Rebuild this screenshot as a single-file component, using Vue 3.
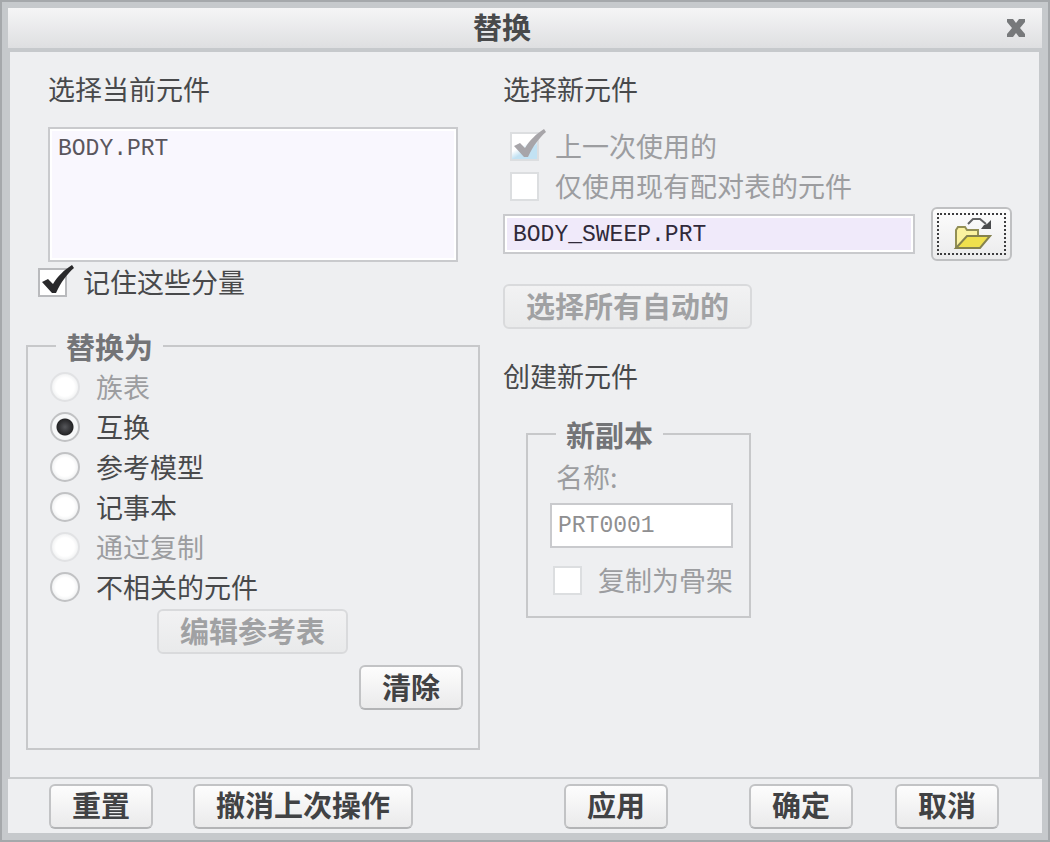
<script setup>
import { ref } from 'vue'

const currentParts = ref('BODY.PRT')
const remember = ref(true)
const lastUsed = ref(true)
const onlyPaired = ref(false)
const newPart = ref('BODY_SWEEP.PRT')
const method = ref('interchange')
const copyName = ref('PRT0001')
const asSkeleton = ref(false)

const methods = [
  { value: 'family', label: '族表', disabled: true },
  { value: 'interchange', label: '互换', disabled: false },
  { value: 'reference', label: '参考模型', disabled: false },
  { value: 'notebook', label: '记事本', disabled: false },
  { value: 'copy', label: '通过复制', disabled: true },
  { value: 'unrelated', label: '不相关的元件', disabled: false },
]
</script>

<template>
  <div class="window" role="dialog" aria-labelledby="dialog-title">
    <header class="titlebar">
      <h1 id="dialog-title">替换</h1>
      <button class="close" type="button" aria-label="关闭">
        <svg width="20" height="20" viewBox="0 0 20 20">
          <path d="M1 1 H7 L10 5 L13 1 H19 V4 L14 10 L19 16 V19 H13 L10 15 L7 19 H1 V16 L6 10 L1 4 Z" fill="#77797b" />
        </svg>
      </button>
    </header>

    <main class="content">
      <section class="left">
        <div class="current">
          <label class="heading" for="current-part">选择当前元件</label>
          <textarea id="current-part" v-model="currentParts" class="list" readonly></textarea>
        </div>

        <label class="option remember">
          <span class="box">
            <input v-model="remember" type="checkbox" />
            <svg v-if="remember" class="tick" width="36" height="34" viewBox="0 0 36 34">
              <path d="M4 18 L10 15 L15 20 C20 12 26 6 34 1 L36 4 C29 10 23 18 18 29 L14 29 Z" fill="#29292b" />
            </svg>
          </span>
          记住这些分量
        </label>

        <fieldset class="group replace">
          <legend>替换为</legend>
          <label
            v-for="item in methods"
            :key="item.value"
            class="option radio"
            :class="{ disabled: item.disabled }"
          >
            <input v-model="method" type="radio" name="method" :value="item.value" :disabled="item.disabled" />
            {{ item.label }}
          </label>
          <button class="btn edit" type="button" disabled>编辑参考表</button>
          <button class="btn clear" type="button">清除</button>
        </fieldset>
      </section>

      <section class="right">
        <h2 class="heading">选择新元件</h2>
        <div class="sources">
          <label class="option disabled">
            <span class="box">
              <input v-model="lastUsed" class="tinted" type="checkbox" disabled />
              <svg v-if="lastUsed" class="tick" width="36" height="34" viewBox="0 0 36 34">
                <path d="M4 18 L10 15 L15 20 C20 12 26 6 34 1 L36 4 C29 10 23 18 18 29 L14 29 Z" fill="#a7a5a9" />
              </svg>
            </span>
            上一次使用的
          </label>
          <label class="option disabled">
            <span class="box"><input v-model="onlyPaired" type="checkbox" disabled /></span>
            仅使用现有配对表的元件
          </label>
        </div>
        <div class="picker">
          <input v-model="newPart" class="field part" type="text" aria-label="新元件" />
          <button class="open" type="button" aria-label="打开">
            <svg width="40" height="36" viewBox="0 0 40 36">
              <path d="M4 32 V14 L6 11 H13 L15 14 H26 V19" fill="#fbf2a0" stroke="#928f55" stroke-width="2" />
              <path d="M4 32 L15 20 H38 L28 32 Z" fill="#efe04d" stroke="#85824f" stroke-width="2" />
              <path d="M16 8 L18 6 L21 3 H28 L34 8" fill="none" stroke="#606163" stroke-width="2" />
              <path d="M39 4 V13 H29 L32 9 L35 8 Z" fill="#4b4c4e" />
            </svg>
          </button>
        </div>
        <button class="btn auto" type="button" disabled>选择所有自动的</button>

        <h2 class="heading create">创建新元件</h2>
        <fieldset class="group copy">
          <legend>新副本</legend>
          <label class="name" for="copy-name">名称:</label>
          <input id="copy-name" v-model="copyName" class="field copy-field" type="text" disabled />
          <label class="option disabled">
            <span class="box"><input v-model="asSkeleton" type="checkbox" disabled /></span>
            复制为骨架
          </label>
        </fieldset>
      </section>
    </main>

    <footer class="actions">
      <button class="btn" type="button">重置</button>
      <button class="btn undo" type="button">撤消上次操作</button>
      <button class="btn apply" type="button">应用</button>
      <button class="btn ok" type="button">确定</button>
      <button class="btn cancel" type="button">取消</button>
    </footer>
  </div>
</template>

<style>
body {
  margin: 0;
}
</style>

<style scoped>
* {
  box-sizing: border-box;
}

.window {
  display: flex;
  flex-direction: column;
  min-height: 100vh;
  padding: 6px 6px 7px;
  border: 2px solid #a5a8ab;
  background: #c6c9cc;
  color: #48494b;
  font: 27px/34px "Noto Sans CJK SC", "Liberation Sans", sans-serif;
}

.titlebar {
  display: grid;
  grid-template-columns: 44px 1fr 44px;
  align-items: center;
  height: 40px;
  padding-right: 4px;
  background: linear-gradient(#f5f5f6, #dedfe1);
}

h1 {
  grid-column: 2;
  margin: 0;
  padding: 0 42px 4px 0;
  font-size: 29px;
  line-height: 34px;
  text-align: center;
  color: #48494b;
}

.close {
  display: flex;
  justify-content: center;
  padding: 0;
  border: 0;
  background: none;
}

.content {
  flex: 1;
  display: grid;
  grid-template-columns: 454fr 509fr;
  gap: 23px;
  margin: 4px 3px 0 2px;
  padding: 20px 27px 27px 16px;
  background: #eeeff1;
}

.left,
.right {
  display: flex;
  flex-direction: column;
  align-items: flex-start;
  min-width: 0;
}

.left {
  align-items: stretch;
}

.current {
  display: flex;
  flex-direction: column;
  gap: 21px;
  padding: 0 22px;
}

.heading {
  margin: 0;
  font-size: 27px;
  font-weight: 400;
  line-height: 34px;
}

.list {
  display: block;
  width: 100%;
  height: 135px;
  margin: 0;
  padding: 3px 8px;
  border: 2px solid #c9cacd;
  border-radius: 0;
  outline: 0;
  resize: none;
  background: #f9f7fe;
  box-shadow: inset 0 0 0 2px #fff;
  color: #5a565d;
  font: 23px/34px "Liberation Mono", monospace;
}

.option {
  display: flex;
  align-items: center;
  gap: 16px;
  height: 40px;
  white-space: nowrap;
}

.disabled,
.name {
  color: #9c9da0;
}

.remember {
  margin-left: 12px;
}

.box {
  position: relative;
  display: flex;
}

.box input {
  appearance: none;
  width: 29px;
  height: 29px;
  margin: 0;
  border: 2px solid #b9babd;
  background: #fff;
}

.box input:disabled {
  border-color: #dcdee0;
}

.box .tinted {
  background: linear-gradient(150deg, #fff 45%, #c2e2f3 65%);
}

.tick {
  position: absolute;
  left: 0;
  top: -4px;
}

.group {
  min-width: 0;
  margin: 0;
  border: 2px solid #c7c8ca;
}

legend {
  padding: 0 10px;
  color: #737477;
  font-size: 29px;
  font-weight: 700;
  line-height: 34px;
}

.replace {
  display: flex;
  flex-direction: column;
  margin-top: 27px;
  padding: 4px 15px 38px 22px;
}

.replace legend {
  margin-left: 6px;
}

.radio input {
  appearance: none;
  width: 30px;
  height: 30px;
  margin: 0;
  border: 2px solid #c1c2c4;
  border-radius: 50%;
  background: radial-gradient(#fff 50%, #eff0f1 75%);
}

.radio input:checked {
  background: radial-gradient(circle at 50% 50%, #55565a 0, #242426 8px, #f6f7f8 9px);
}

.radio input:disabled {
  border-color: #e1e2e4;
}

.btn {
  flex: none;
  height: 45px;
  padding: 0 21px 4px;
  border: 2px solid #c2c3c5;
  border-bottom-color: #b3b4b6;
  border-radius: 6px;
  background: linear-gradient(#fdfdfd, #eaeaeb);
  color: #414244;
  font: 700 29px/34px "Noto Sans CJK SC", "Liberation Sans", sans-serif;
  white-space: nowrap;
}

.btn:disabled {
  border-color: #d9dadc;
  background: linear-gradient(#f2f2f3, #e9eaeb);
  color: #a0a1a3;
}

.edit {
  align-self: flex-start;
  margin: 2px 0 11px 107px;
}

.clear {
  align-self: flex-end;
}

.sources {
  margin: 20px 0 1px 7px;
}

.picker {
  display: flex;
  align-items: center;
  gap: 16px;
  width: 100%;
}

.field {
  min-width: 0;
  border: 2px solid #c9cacd;
  border-radius: 0;
  outline: 0;
  background: #fff;
  font: 23px/34px "Liberation Mono", monospace;
}

.part {
  flex: 1;
  height: 40px;
  padding: 2px 8px 0;
  background: #f0eafa;
  box-shadow: inset 0 0 0 2px #fff;
  color: #302a3a;
}

.open {
  position: relative;
  display: flex;
  align-items: center;
  justify-content: center;
  width: 81px;
  height: 54px;
  padding: 0;
  border: 2px solid #bfc0c2;
  border-radius: 6px;
  background: linear-gradient(#fdfdfd, #ebebec);
}

.open::after {
  content: "";
  position: absolute;
  inset: 4px;
  border: 2px dotted #3d3d3f;
}

.auto {
  margin-top: 23px;
}

.create {
  margin-top: 30px;
}

.copy {
  display: flex;
  flex-direction: column;
  width: 225px;
  margin: 24px 0 0 23px;
  padding: 9px 16px 16px 22px;
}

.copy legend {
  margin-left: 6px;
}

.name {
  padding-left: 6px;
}

.copy-field {
  width: 100%;
  height: 45px;
  margin: 9px 0 12px;
  padding: 0 6px;
  color: #8f8f91;
}

.copy .option {
  padding-left: 3px;
}

.actions {
  display: flex;
  align-items: center;
  height: 56px;
  padding: 0 43px 0 41px;
  border-top: 2px solid #c9cbcd;
  background: #eeeff1;
}

.undo {
  margin-left: 40px;
}

.apply {
  margin-left: auto;
}

.ok {
  margin-left: 81px;
}

.cancel {
  margin-left: 42px;
}
</style>
